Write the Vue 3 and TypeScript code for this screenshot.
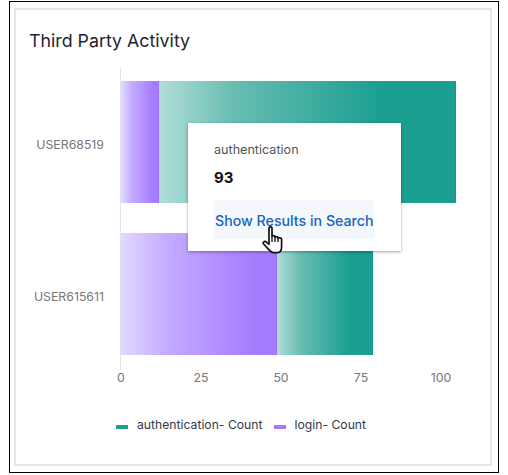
<script setup lang="ts">
interface Row { user: string; login: number; auth: number }
const scale = 3.19
const rows: Row[] = [
  { user: 'USER68519', login: 12, auth: 93 },
  { user: 'USER615611', login: 49, auth: 30 },
]
const ticks = [0, 25, 50, 75, 100]
const w = (n: number) => `${n * scale}px`
</script>

<template>
  <div class="frame">
    <section class="card">
      <h2 class="title">Third Party Activity</h2>
      <div class="chart">
        <div class="labels">
          <div v-for="r in rows" :key="r.user" class="label">{{ r.user }}</div>
        </div>
        <div class="plot">
          <div v-for="r in rows" :key="r.user" class="bar-row">
            <div class="bar login" :style="{ width: w(r.login) }"></div>
            <div class="bar auth" :style="{ width: w(r.auth) }"></div>
          </div>
        </div>
        <div class="tooltip">
          <div class="tip-name">authentication</div>
          <div class="tip-value">93</div>
          <a class="tip-link">Show Results in Search</a>
        </div>
        <svg class="hand" viewBox="0 0 22 28" width="22" height="28">
          <path d="M7 2C7 .4 10 .4 10 2V10.5C10 9.4 13 9.4 13 10.5V11.5C13 10.4 16 10.4 16 11.5V12.5C16 11.4 19.6 11.4 19.6 13V20.5C19.6 23.5 18.5 26.6 15.5 26.6H11.5C9.5 26.6 8.4 25.4 6.8 23.6L1.6 18C.4 16.4 2.6 14.6 4.2 15.8L7 18.4Z" fill="#fff" stroke="#111" stroke-width="1.7" stroke-linejoin="round"/>
          <path d="M10 10.5V16M13 11.5V16M16 12.5V16" fill="none" stroke="#111" stroke-width="1.3"/>
        </svg>
      </div>
      <div class="ticks">
        <span v-for="t in ticks" :key="t" class="tick">{{ t }}</span>
      </div>
      <div class="legend">
        <span class="swatch teal"></span><span class="legend-text">authentication- Count</span>
        <span class="swatch purple"></span><span class="legend-text">login- Count</span>
      </div>
    </section>
  </div>
</template>

<style scoped>
.frame {
  box-sizing: border-box;
  width: 490px;
  height: 472px;
  margin: 1px 0 0 9px;
  padding: 6px 6px 6px 4px;
  border: 1px solid #000;
  font-family: Inter, "Liberation Sans", sans-serif;
}
.card {
  box-sizing: border-box;
  height: 458px;
  padding: 0 13px;
  border: 2px solid #e6e6e6;
  background: #fff;
}
.title {
  margin: 19px 0 0;
  font-size: 17.8px;
  line-height: 24px;
  font-weight: 400;
  color: #1d2433;
}
.chart {
  position: relative;
  display: flex;
  margin-top: 14px;
}
.labels {
  box-sizing: border-box;
  width: 91px;
  padding: 14px 16px 15px 0;
  display: flex;
  flex-direction: column;
  gap: 30px;
}
.label {
  height: 122px;
  padding-top: 4px;
  box-sizing: border-box;
  display: flex;
  align-items: center;
  justify-content: flex-end;
  font-size: 12.3px;
  color: #777;
}
.plot {
  flex: 1;
  padding: 14px 0 15px;
  border-left: 1px solid #dde2f3;
  display: flex;
  flex-direction: column;
  gap: 30px;
}
.bar-row {
  display: flex;
  height: 122px;
}
.bar { height: 100%; }
.login {
  background: linear-gradient(90deg, #e2d8ff 0%, #c4abff 30%, #a67cff 85%);
  box-shadow: inset -1px 0 0 #9b6fff;
}
.auth {
  background: linear-gradient(90deg, #b2ded8 0%, #68bdb2 25%, #1a9f91 75%);
  box-shadow: inset -1px 0 0 #0d9a8a;
}
.tooltip {
  position: absolute;
  left: 159px;
  top: 56px;
  box-sizing: border-box;
  width: 213px;
  height: 128px;
  padding: 19px 27px 0 26px;
  background: #fff;
  box-shadow: 0 1px 3px rgba(0, 0, 0, 0.35);
}
.tip-name {
  font-size: 12.6px;
  line-height: 16px;
  color: #555;
}
.tip-value {
  margin-top: 10px;
  font-size: 15px;
  line-height: 20px;
  font-weight: 700;
  color: #111;
}
.tip-link {
  display: block;
  margin-top: 12px;
  padding-left: 1px;
  height: 39px;
  line-height: 41px;
  background: #f4f8fd;
  font-size: 14.2px;
  font-weight: 500;
  color: #1565c0;
  white-space: nowrap;
}
.hand {
  position: absolute;
  left: 233px;
  top: 159px;
}
.ticks {
  display: flex;
  margin: 0 0 0 52px;
  height: 16px;
}
.tick {
  flex: none;
  width: 80px;
  text-align: center;
  font-size: 12.3px;
  line-height: 16px;
  color: #777;
}
.legend {
  display: flex;
  align-items: center;
  margin: 29px 0 0 87px;
  height: 18px;
}
.swatch {
  width: 12px;
  height: 4px;
  margin: 6px 9px 0 0;
}
.teal { background: #1a9f91; }
.purple { background: #a67cff; margin-left: 11px; }
.legend-text {
  font-size: 12.2px;
  color: #333a47;
  white-space: nowrap;
}
</style>
